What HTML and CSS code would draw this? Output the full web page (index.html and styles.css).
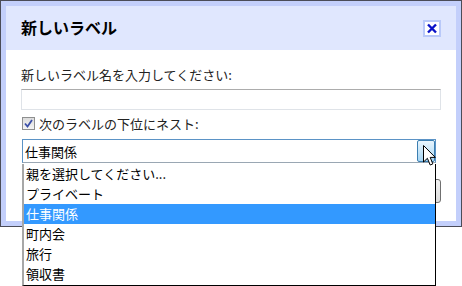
FILE: index.html
```html
<!DOCTYPE html>
<html lang="ja">
  <head>
    <meta charset="UTF-8" />
    <title>新しいラベル</title>
    <link rel="stylesheet" href="styles.css">
  </head>
  <body>
    <div class="dialog">
      <div class="frame">
        <div class="header">
          <h1 class="title">新しいラベル</h1>
          <span class="close">
            <svg width="12" height="11" viewBox="0 0 12 11">
              <path d="M2 1.5 L10 9.5 M10 1.5 L2 9.5" stroke="#0a12c8" stroke-width="2.4" fill="none" />
            </svg>
          </span>
        </div>

        <div class="content">
          <label class="field-label">新しいラベル名を入力してください:</label>
          <input type="text" class="name-input" />

          <div class="check-row">
            <span class="checkbox">
              <svg width="9" height="9" viewBox="0 0 9 9">
                <path d="M1 4.5 L3.5 7.5 L8 1" stroke="#3b4fa8" stroke-width="1.8" fill="none" />
              </svg>
            </span>
            <span>次のラベルの下位にネスト:</span>
          </div>

          <div class="select">
            <span class="select-text">仕事関係</span>
            <span class="select-btn"></span>
          </div>

          <!-- ボタン (リストの下に隠れる) -->
          <div class="actions">
            <button class="btn">作成</button>
            <button class="btn">キャンセル</button>
          </div>
        </div>
      </div>
    </div>

    <ul class="options">
      <li>親を選択してください...</li>
      <li>プライベート</li>
      <li class="active">仕事関係</li>
      <li>町内会</li>
      <li>旅行</li>
      <li>領収書</li>
    </ul>

    <svg class="cursor" width="13" height="22" viewBox="0 0 13 22">
      <path d="M0.5 0.5 L0.5 17 L4.4 13.3 L7.2 20 L9.8 18.9 L7.2 12.4 L12.3 12.4 Z" fill="#fff" stroke="#000" stroke-width="1" />
    </svg>
  </body>
</html>
```

FILE: styles.css
```css
* {
  margin: 0;
  padding: 0;
  box-sizing: border-box;
}

body {
  font-family: "Noto Sans CJK JP", "Noto Sans", sans-serif;
  background: #fff;
  color: #222;
  width: 462px;
  height: 286px;
  overflow: hidden;
  position: relative;
}

.dialog {
  width: 462px;
  height: 227px;
  border: 1px solid #4b4c58;
}

.frame {
  height: 100%;
  border: 5px solid #c3cffb;
  background: #fff;
}

.header {
  height: 44px;
  background: #e0e7fe;
  display: flex;
  align-items: center;
  justify-content: space-between;
  padding: 0 15px;
}

.title {
  font-size: 16px;
  font-weight: bold;
  color: #000;
  line-height: 20px;
  margin-top: -2px;
}

.close {
  width: 18px;
  height: 17px;
  border: 2px solid #b9c9f9;
  background: #fff;
  display: flex;
  align-items: center;
  justify-content: center;
}

.content {
  padding: 16px 15px 0 15px;
}

.field-label {
  display: block;
  font-size: 13px;
  line-height: 17px;
  margin-bottom: 6px;
}

.name-input {
  display: block;
  width: 420px;
  height: 21px;
  border: 1px solid #dfe3e8;
  border-top-color: #acacac;
  background: #fff;
}

.check-row {
  display: flex;
  align-items: center;
  gap: 4px;
  margin-top: 6px;
  font-size: 13px;
  line-height: 15px;
  padding-left: 1px;
}

.checkbox {
  width: 13px;
  height: 13px;
  border: 1px solid #8e8f8f;
  background: linear-gradient(#dcdcdc, #f4f4f4);
  display: flex;
  align-items: center;
  justify-content: center;
}

.select {
  margin-top: 8px;
  margin-left: 1px;
  width: 414px;
  height: 24px;
  border: 1px solid #5b93c6;
  border-bottom-color: #9aa7b3;
  display: flex;
  align-items: center;
  justify-content: space-between;
  background: #fff;
}

.select-text {
  font-size: 13px;
  padding-left: 2px;
  color: #000;
}

.select-btn {
  width: 18px;
  height: 22px;
  border: 1px solid #3c7fb1;
  border-radius: 2px;
  background: linear-gradient(#e8f5fd, #a7d6f4);
}

.actions {
  margin-top: 16px;
  display: flex;
  justify-content: flex-end;
  gap: 8px;
}

.btn {
  height: 24px;
  padding: 0 14px;
  font-family: inherit;
  font-size: 13px;
  border: 1px solid #707070;
  border-radius: 3px;
  background: linear-gradient(#f2f2f2, #dddddd);
}

.options {
  position: absolute;
  left: 22px;
  top: 164px;
  width: 414px;
  height: 122px;
  list-style: none;
  background: #fff;
  border-left: 2px solid #a7a7a7;
  border-right: 1px solid #000;
  border-bottom: 1px solid #000;
}

.options li {
  height: 20px;
  line-height: 20px;
  font-size: 13px;
  padding-left: 2px;
  color: #000;
}

.options li.active {
  background: #3399ff;
  color: #fff;
}

.cursor {
  position: absolute;
  left: 423px;
  top: 145px;
}
```
